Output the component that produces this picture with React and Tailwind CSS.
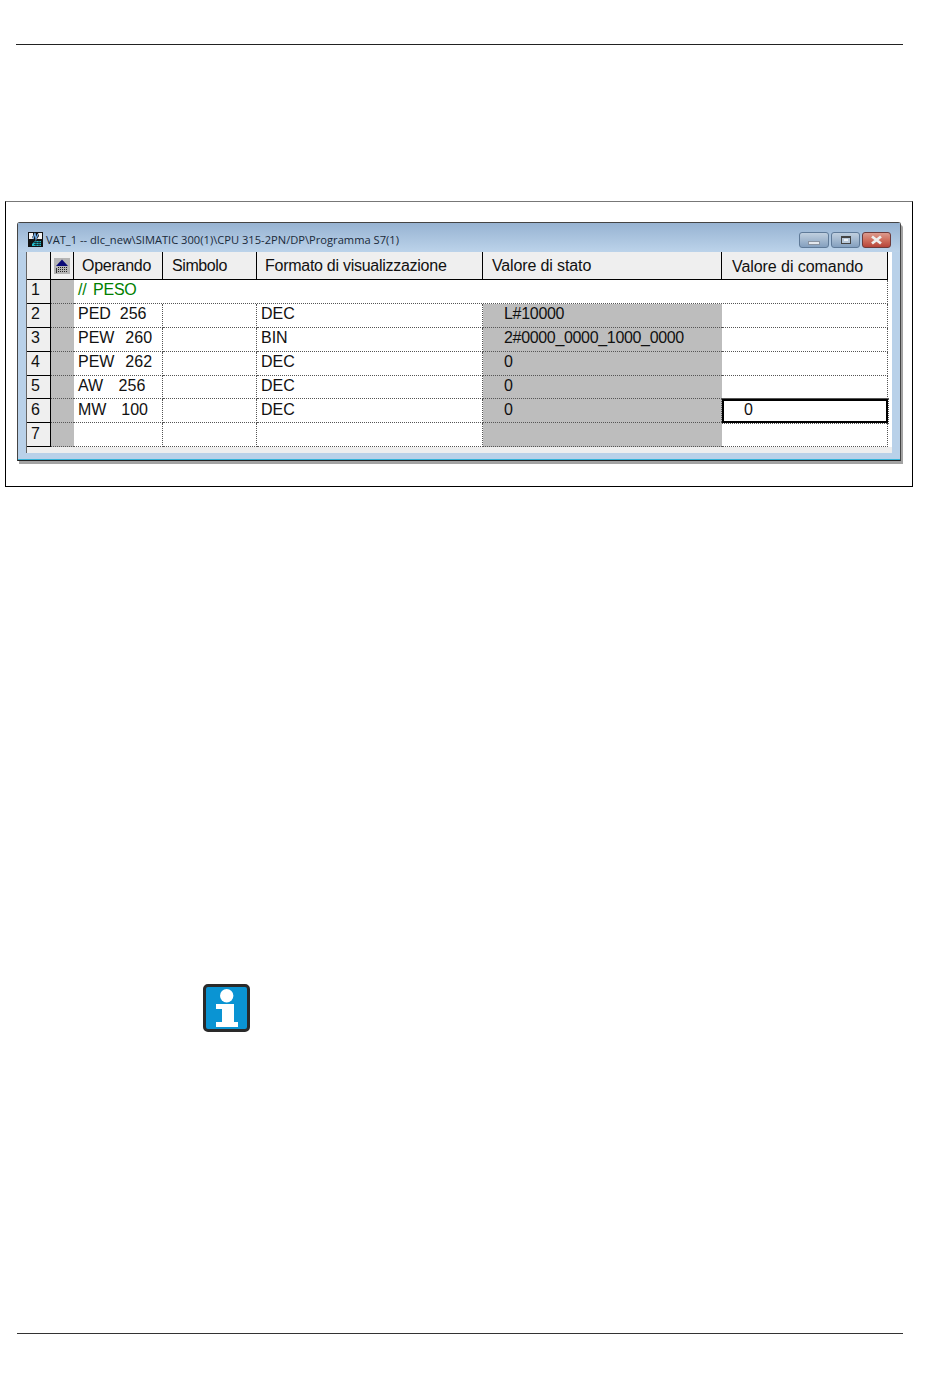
const rows = [
  { n: '2', op: 'PED  256', ws: '', fmt: 'DEC', val: 'L#10000', vt: 'tracking-[-0.3px]', h: 'h-[24px]', extra: '' },
  { n: '3', op: 'PEW  260', ws: '[word-spacing:1px]', fmt: 'BIN', val: '2#0000_0000_1000_0000', vt: 'tracking-[-0.33px]', h: 'h-[24px]', extra: '' },
  { n: '4', op: 'PEW  262', ws: '[word-spacing:1px]', fmt: 'DEC', val: '0', vt: '', h: 'h-[24px]', extra: '' },
  { n: '5', op: 'AW   256', ws: '[word-spacing:0.7px]', fmt: 'DEC', val: '0', vt: '', h: 'h-[23px]', extra: '' },
  { n: '6', op: 'MW   100', ws: '[word-spacing:0.5px]', fmt: 'DEC', val: '0', vt: '', h: 'h-[24px]', extra: 'pt-[1px]', active: true },
  { n: '7', op: '', ws: '', fmt: '', val: '', vt: '', h: 'h-[24px]', extra: 'pt-[1px]' },
];

const dot = 'border-b border-r border-dotted border-[#555]';

function Head({ children, className = '' }) {
  return (
    <div className={`bg-[#efefef] border-b border-b-black border-r border-r-black flex items-center h-[28px] ${className}`}>
      {children}
    </div>
  );
}

function WinButton({ className, children }) {
  return (
    <div className={`h-[16px] rounded-[3px] border border-[#5f7a98] flex items-center justify-center ${className}`}>
      {children}
    </div>
  );
}

export default function App() {
  return (
    <div className="w-[950px] h-[1378px] bg-white overflow-hidden pt-[44px] font-['Liberation_Sans',Arial,sans-serif] text-[16px] text-[#111]">
      <div className="ml-[16px] w-[887px] h-px bg-[#222]" />

      <div className="mt-[156px] ml-[5px] w-[908px] h-[286px] border border-black border-t-[#777] pt-[20px] pl-[11px]">
        <div className="w-[884px] h-[239px] bg-[#b9d1e9] border border-[#444] border-b-[#222] rounded-t-[3px] shadow-[2px_3px_0_#a3a3a3] flex flex-col">
          <div className="h-[29px] shrink-0 bg-gradient-to-b from-[#97b3d2] to-[#bcd3ea] flex items-center pt-[4px] pl-[10px] pr-[9px]">
            <svg width="15" height="15" viewBox="0 0 15 15" className="shrink-0">
              <rect width="15" height="15" fill="#111" />
              <path d="M1 1h4v3l-1 1 2 2H1zM10 1h4v6H9l2-3z" fill="#f2f2f2" />
              <path d="M5 7l2-6 1 6 2-5" stroke="#6fa8e0" fill="none" strokeWidth="1.2" />
              <path d="M4 12l3-3h6v5H4z" fill="#22b8c8" />
              <path d="M6 10.5h7M6 12.5h7M8 9v5M11 9v5" stroke="#111" strokeWidth="0.7" />
            </svg>
            <span className="ml-[3px] font-['Open_Sans',sans-serif] text-[11.15px] leading-none text-[#1a2a3a] whitespace-pre">VAT_1 -- dlc_new\SIMATIC 300(1)\CPU 315-2PN/DP\Programma S7(1)</span>
            <div className="ml-auto flex gap-[2px]">
              <WinButton className="w-[30px] bg-gradient-to-b from-[#c0cfdf] via-[#a3b8cf] to-[#84a0bf]">
                <div className="w-[12px] h-[4px] mt-[6px] bg-[#e4e8ee] border border-[#8a93a0]" />
              </WinButton>
              <WinButton className="w-[29px] bg-gradient-to-b from-[#c0cfdf] via-[#a3b8cf] to-[#84a0bf]">
                <div className="w-[10px] h-[8px] border border-[#444] border-t-2 bg-[#b9c9da] flex items-center justify-center">
                  <div className="w-[4px] h-[2px] bg-[#eef2f6]" />
                </div>
              </WinButton>
              <WinButton className="w-[29px] bg-gradient-to-b from-[#dc9a8e] via-[#cf6f5e] to-[#b6443a] border-[#6d3a3a]">
                <svg width="15" height="10" viewBox="0 0 15 10">
                  <path d="M3 1.5l9 7M12 1.5l-9 7" stroke="#eeeeee" strokeWidth="2.8" />
                </svg>
              </WinButton>
            </div>
          </div>

          <div className="flex-1 ml-[8px] mr-[8px] bg-[#eeeeee] border-l border-[#666]">
            <div className="grid grid-cols-[24px_23px_89px_94px_226px_239px_166px] bg-white">
              <Head />
              <Head className="justify-center">
                <svg width="16" height="16" viewBox="0 0 16 16">
                  <rect width="16" height="16" fill="#b5b5b5" />
                  <path d="M8 1.5L14 8H2z" fill="#0b0b78" />
                  <path d="M4 9.5h10M4 11.5h10M4 13.5h10" stroke="#222" strokeDasharray="1 1" />
                  <path d="M2.5 10v5" stroke="#333" />
                </svg>
              </Head>
              <Head className="pl-[8px] pb-[1px] pt-[1px] tracking-[-0.25px]">Operando</Head>
              <Head className="pl-[9px] pb-[1px] pt-[1px] tracking-[-0.4px]">Simbolo</Head>
              <Head className="pl-[8px] pb-[1px] pt-[1px] tracking-[-0.27px]">Formato di visualizzazione</Head>
              <Head className="pl-[9px] pb-[1px] pt-[1px] tracking-[-0.13px]">Valore di stato</Head>
              <Head className="pl-[10px] pt-[2px] border-r-[#555] tracking-[-0.06px]">Valore di comando</Head>

              <div className="h-[24px] bg-[#efefef] border-b border-r border-black pl-[4px] leading-[20px]">1</div>
              <div className="h-[24px] bg-[#bdbdbd] border-b border-dotted border-[#555]" />
              <div className={`col-span-5 h-[24px] pl-[4px] leading-[20px] text-[#008000] tracking-[-0.25px] [word-spacing:2.5px] ${dot}`}>// PESO</div>

              {rows.map((r) => (
                <div key={r.n} className="contents">
                  <div className={`${r.h} ${r.extra} bg-[#efefef] border-b border-r border-black pl-[4px] leading-[20px]`}>{r.n}</div>
                  <div className={`${r.h} bg-[#bdbdbd] border-b border-dotted border-[#555]`} />
                  <div className={`${r.h} ${r.extra} ${r.ws} pl-[4px] leading-[20px] whitespace-pre ${dot}`}>{r.op}</div>
                  <div className={`${r.h} ${dot}`} />
                  <div className={`${r.h} ${r.extra} pl-[4px] leading-[20px] ${dot}`}>{r.fmt}</div>
                  <div className={`${r.h} ${r.extra} ${r.vt} bg-[#bdbdbd] leading-[20px] whitespace-pre pl-[21px] border-b border-dotted border-[#555]`}>{r.val}</div>
                  {r.active ? (
                    <div className="h-[24px] border-2 border-black pl-[20px] leading-[18px] outline-1 outline-dotted outline-[#555]">0</div>
                  ) : (
                    <div className={`${r.h} ${dot}`} />
                  )}
                </div>
              ))}
            </div>
          </div>
          <div className="h-[1px] bg-[#35b3d8] mt-[6px]" />
        </div>
      </div>

      <div className="mt-[497px] ml-[203px] w-[47px] h-[48px] rounded-[5px] bg-[#0a94d3] border-[3px] border-[#2a2a2a] flex flex-col items-center">
        <svg width="41" height="42" viewBox="0 0 41 42">
          <circle cx="20.7" cy="8.7" r="6.7" fill="#fff" />
          <path d="M10 17h18v18h4v5H10v-5h6V22h-6z" fill="#fff" />
        </svg>
      </div>

      <div className="mt-[301px] ml-[17px] w-[886px] h-px bg-[#333]" />
    </div>
  );
}
